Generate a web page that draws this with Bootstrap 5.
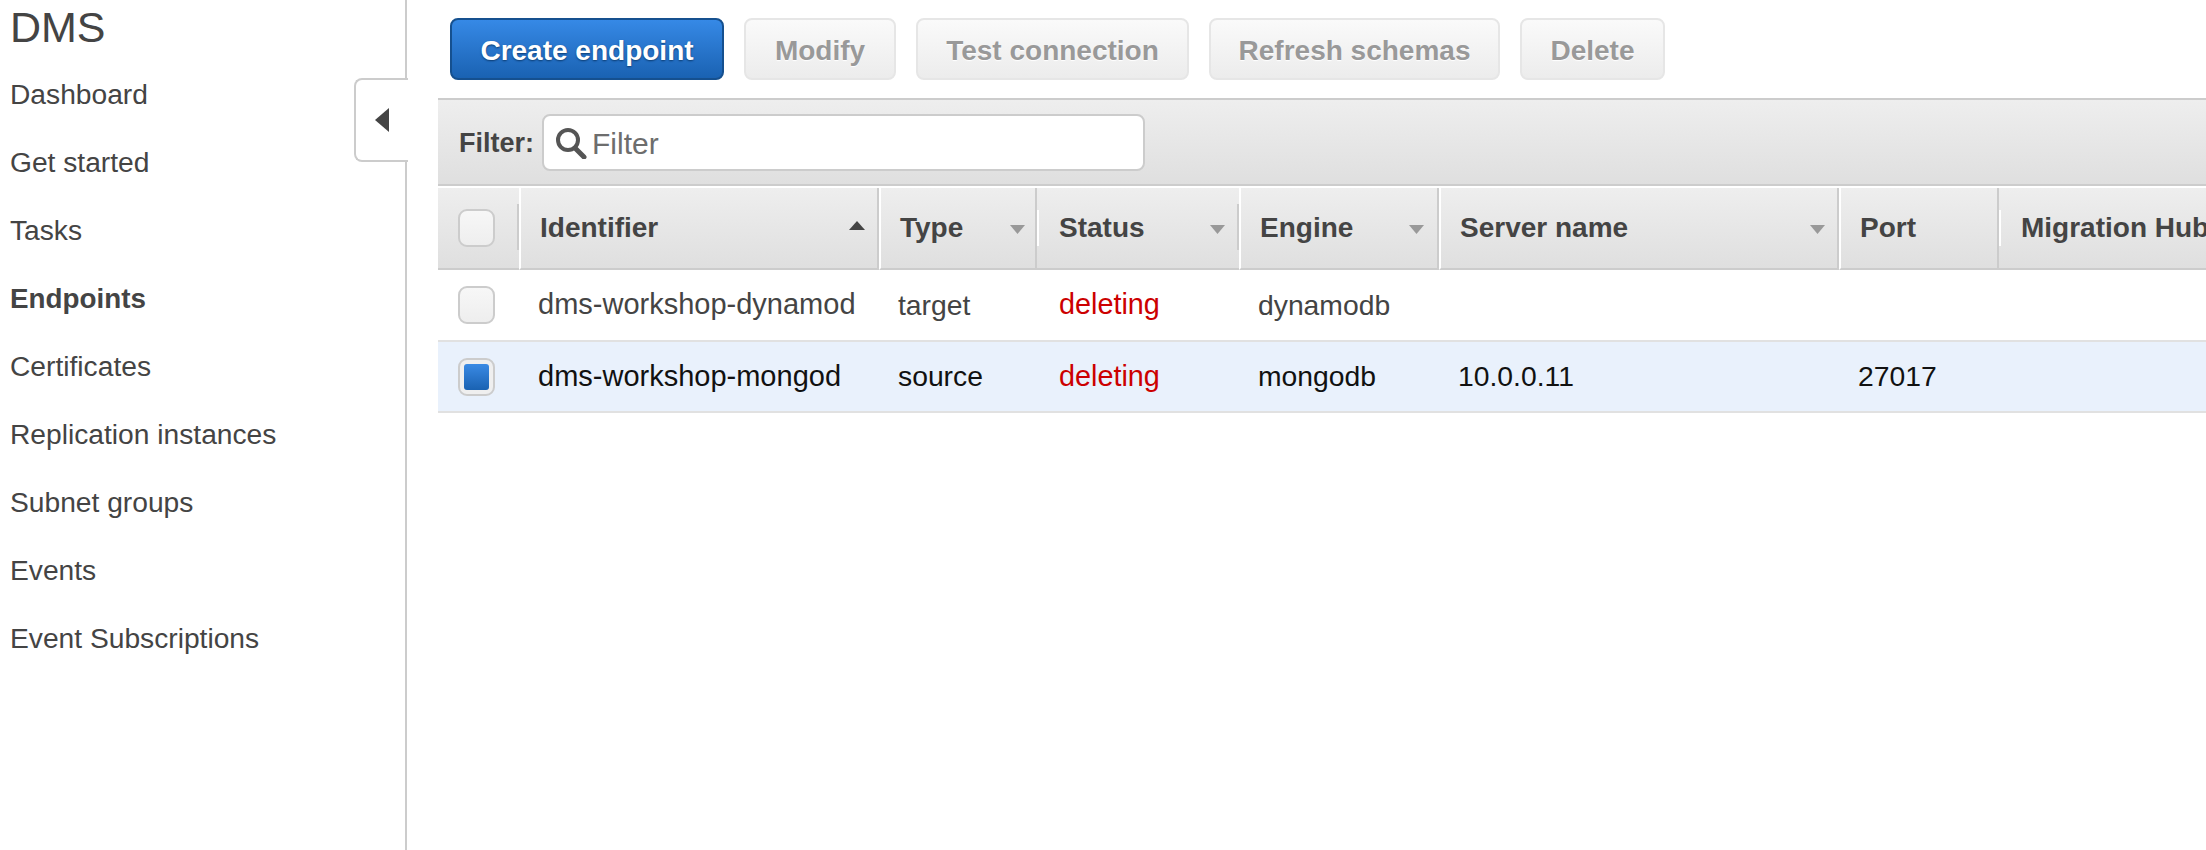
<!DOCTYPE html>
<html lang="en">
<head>
  <meta charset="UTF-8" />
  <meta name="viewport" content="width=device-width, initial-scale=1.0" />
  <title>DMS Endpoints</title>
  <link href="https://cdn.jsdelivr.net/npm/bootstrap@5.3.0/dist/css/bootstrap.min.css" rel="stylesheet" />
  <style>
    body { font-family: "Liberation Sans", Arial, sans-serif; color: #444; overflow: hidden; height: 850px; }

    /* Sidebar */
    .side-pane { width: 407px; height: 850px; border-right: 2px solid #ccc; flex-shrink: 0; position: relative; }
    .side-title { font-size: 43px; line-height: 50px; padding: 2px 0 0 10px; margin: 0; font-weight: 400; letter-spacing: -.1px; }
    .side-links { padding-top: 8px; }
    .side-links .nav-link { font-size: 28.2px; line-height: 32px; height: 68px; padding: 18px 0 0 10px; color: #444; }
    .side-links .nav-link.active { font-weight: 700; font-size: 27.8px; padding-top: 19px; }
    .side-toggle { position: absolute; left: 354px; top: 78px; width: 54px; height: 84px; background: #fff; border: 2px solid #ccc; border-right: 0; border-radius: 8px 0 0 8px; }

    /* Toolbar */
    .main-pane { flex: 1; min-width: 0; padding: 18px 0 0 31px; overflow: hidden; }
    .tool-row { padding-left: 12px; height: 62px; margin-bottom: 18px; gap: 20px; }
    .tool-btn { font-family: inherit; font-size: 28px; font-weight: 700; line-height: 36px; height: 62px; padding: 13px 0 9px; border-radius: 8px; }
    .tool-create { width: 274px; }
    .tool-modify { width: 152px; }
    .tool-test { width: 273px; }
    .tool-refresh { width: 291px; }
    .tool-delete { width: 145px; }
    .tool-on, .tool-on:hover { background: linear-gradient(#3689e6, #1a62b2); border: 2px solid #15508f; color: #fff; text-shadow: 0 1px 2px #0b3a6e; }
    .tool-off, .tool-off:disabled { background: linear-gradient(#fafafa, #ececec); border: 2px solid #e6e6e6; color: #999; text-shadow: 0 1px 1px #fff; opacity: 1; }

    /* Filter bar */
    .filter-bar { height: 88px; background: linear-gradient(#eee, #dfdfdf); border-top: 2px solid #ccc; border-bottom: 2px solid #ccc; padding-left: 21px; gap: 8px; }
    .filter-bar label { font-size: 27px; font-weight: 700; padding-top: 2px; }
    .filter-box { width: 603px; height: 57px; background: #fff; border: 2px solid #ccc; border-radius: 8px; padding-left: 11px; gap: 5px; }
    .filter-box svg { margin-top: 2px; }
    .filter-box input { border: 0; outline: 0; padding: 3px 0 0; flex: 1; min-width: 0; font-size: 30px; background: transparent; color: #444; }
    .filter-box input::placeholder { color: #6d6d6d; opacity: 1; }

    /* Table */
    .table-clip { overflow: hidden; margin-top: 2px; }
    .ep-table { table-layout: fixed; width: 1961px; border-collapse: separate; border-spacing: 0; margin: 0; }
    .ep-table th, .ep-table td { padding: 0 0 0 19px; vertical-align: middle; white-space: nowrap; box-shadow: none; }
    .ep-table > thead > tr > th { position: relative; height: 82px; font-size: 28px; font-weight: 700; color: #444; background: linear-gradient(#eee, #dfdfdf); border-bottom: 2px solid #ccc; }
    .ep-table > tbody > tr > td { font-size: 28.3px; color: #444; background: transparent; border-bottom: 0; height: 70px; }
    .ep-table > tbody > tr.row-picked > td { color: #111; background: #e9f1fc; height: 73px; border-top: 2px solid #e1e1e1; border-bottom: 2px solid #e1e1e1; }
    .ep-table > tbody > tr > td.cell-name { font-size: 29px; }
    .ep-table td.cell-red, .ep-table > tbody > tr.row-picked > td.cell-red { color: #c00; padding-left: 22px; font-size: 28.8px; }
    .ep-table th.cell-pick, .ep-table td.cell-pick { padding-left: 20px; }
    .ep-table th.cell-shift { padding-left: 22px; }
    .ep-table td.cell-port { padding-left: 19px; }

    /* header separators: full height lines as borders, short ones as pseudo elements */
    .edge-grey { border-right: 2px solid #ccc; }
    .edge-white { border-left: 2px solid #fff; }
    .short-grey::after { content: ""; position: absolute; right: 0; top: 16px; height: 46px; border-right: 2px solid #ccc; }
    .short-white::before { content: ""; position: absolute; left: 0; top: 22px; height: 36px; border-left: 2px solid #fff; }
    .sort-mark { position: absolute; top: 50%; margin-top: -3px; }
    .sort-up { margin-top: -7px; }

    /* Checkboxes */
    .pick-box.form-check-input { width: 37px; height: 38px; margin: 0; display: block; float: none; border: 2px solid #ccc; border-radius: 9px; background: linear-gradient(#f7f7f7, #eee); }
    .pick-box.form-check-input:checked { padding: 4px; background: linear-gradient(#3a8ae4, #1a62b2) content-box, #efefef; border-color: #ccc; }
    .pick-box.form-check-input:checked { background-clip: content-box, padding-box; }
  </style>
</head>
<body>

<div class="d-flex">
  <!-- Sidebar -->
  <aside class="side-pane">
    <h1 class="side-title">DMS</h1>
    <nav class="nav flex-column side-links">
      <a class="nav-link" href="#">Dashboard</a>
      <a class="nav-link" href="#">Get started</a>
      <a class="nav-link" href="#">Tasks</a>
      <a class="nav-link active" href="#">Endpoints</a>
      <a class="nav-link" href="#">Certificates</a>
      <a class="nav-link" href="#">Replication instances</a>
      <a class="nav-link" href="#">Subnet groups</a>
      <a class="nav-link" href="#">Events</a>
      <a class="nav-link" href="#">Event Subscriptions</a>
    </nav>
    <div class="side-toggle d-flex align-items-center justify-content-center">
      <svg width="14" height="24" viewBox="0 0 14 24"><path d="M14 0V24L0 12Z" fill="#444"/></svg>
    </div>
  </aside>

  <main class="main-pane">
    <!-- Toolbar -->
    <div class="d-flex tool-row">
      <button class="btn tool-btn tool-on tool-create">Create endpoint</button>
      <button class="btn tool-btn tool-off tool-modify" disabled>Modify</button>
      <button class="btn tool-btn tool-off tool-test" disabled>Test connection</button>
      <button class="btn tool-btn tool-off tool-refresh" disabled>Refresh schemas</button>
      <button class="btn tool-btn tool-off tool-delete" disabled>Delete</button>
    </div>

    <!-- Filter -->
    <div class="d-flex align-items-center filter-bar">
      <label for="filter-input">Filter:</label>
      <div class="d-flex align-items-center filter-box">
        <svg width="32" height="32" viewBox="0 0 32 32" fill="none" stroke="#555">
          <circle cx="13" cy="13" r="10" stroke-width="4"/>
          <path d="M20 21L29 30" stroke-width="5" stroke-linecap="round"/>
        </svg>
        <input id="filter-input" type="text" placeholder="Filter" />
      </div>
    </div>

    <!-- Endpoints table -->
    <div class="table-clip">
      <table class="table ep-table">
        <colgroup>
          <col style="width: 81px" />
          <col style="width: 360px" />
          <col style="width: 158px" />
          <col style="width: 202px" />
          <col style="width: 200px" />
          <col style="width: 400px" />
          <col style="width: 160px" />
          <col style="width: 400px" />
        </colgroup>
        <thead>
          <tr>
            <th class="cell-pick short-grey"><input class="form-check-input pick-box" type="checkbox" aria-label="Select all" /></th>
            <th class="edge-white edge-grey">Identifier
              <svg class="sort-mark sort-up" style="right: 12px" width="16" height="9" viewBox="0 0 16 9"><path d="M8 0L16 9H0Z" fill="#444"/></svg>
            </th>
            <th class="edge-white edge-grey">Type
              <svg class="sort-mark" style="right: 10px" width="15" height="9" viewBox="0 0 15 9"><path d="M0 0H15L7.5 9Z" fill="#999"/></svg>
            </th>
            <th class="cell-shift short-white short-grey">Status
              <svg class="sort-mark" style="right: 14px" width="15" height="9" viewBox="0 0 15 9"><path d="M0 0H15L7.5 9Z" fill="#999"/></svg>
            </th>
            <th class="edge-white edge-grey">Engine
              <svg class="sort-mark" style="right: 13px" width="15" height="9" viewBox="0 0 15 9"><path d="M0 0H15L7.5 9Z" fill="#999"/></svg>
            </th>
            <th class="edge-white edge-grey">Server name
              <svg class="sort-mark" style="right: 12px" width="15" height="9" viewBox="0 0 15 9"><path d="M0 0H15L7.5 9Z" fill="#999"/></svg>
            </th>
            <th class="edge-white edge-grey">Port</th>
            <th class="cell-shift short-white">Migration Hub</th>
          </tr>
        </thead>
        <tbody>
          <tr>
            <td class="cell-pick"><input class="form-check-input pick-box" type="checkbox" aria-label="Select dms-workshop-dynamod" /></td>
            <td class="cell-name">dms-workshop-dynamod</td>
            <td>target</td>
            <td class="cell-red">deleting</td>
            <td>dynamodb</td>
            <td></td>
            <td class="cell-port"></td>
            <td></td>
          </tr>
          <tr class="row-picked">
            <td class="cell-pick"><input class="form-check-input pick-box" type="checkbox" checked aria-label="Select dms-workshop-mongod" /></td>
            <td class="cell-name">dms-workshop-mongod</td>
            <td>source</td>
            <td class="cell-red">deleting</td>
            <td>mongodb</td>
            <td>10.0.0.11</td>
            <td class="cell-port">27017</td>
            <td></td>
          </tr>
        </tbody>
      </table>
    </div>
  </main>
</div>

<script src="https://cdn.jsdelivr.net/npm/bootstrap@5.3.0/dist/js/bootstrap.bundle.min.js"></script>
</body>
</html>
